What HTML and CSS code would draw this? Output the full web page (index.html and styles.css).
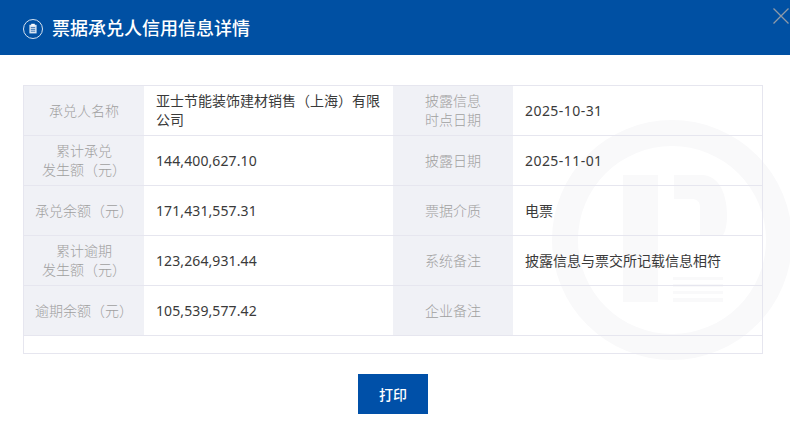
FILE: index.html
```html
<!DOCTYPE html>
<html lang="zh-CN">
<head>
<meta charset="utf-8">
<title>票据承兑人信用信息详情</title>
<link rel="stylesheet" href="styles.css">
</head>
<body>
<header class="header">
  <span class="header-icon">
    <svg viewBox="0 0 20 20" width="20" height="20"><circle cx="10" cy="10" r="9.5" fill="none" stroke="#d5e2f0" stroke-width="1"/><path d="M6.4 5.8h7.2v8.6H6.4z" fill="#d9e5f2"/><path d="M8.2 4.8h3.6v1.8H8.2z" fill="#fff"/><path d="M7.8 8.6h4.4M7.8 10.4h4.4M7.8 12.2h4.4" stroke="#0050a3" stroke-width=".7"/></svg>
  </span>
  <h1 class="title">票据承兑人信用信息详情</h1>
  <svg class="close" viewBox="0 0 16 16" width="16" height="16"><path d="M.5.5l15 15M15.5.5l-15 15" stroke="#8f9aa8" stroke-width="1.3" fill="none"/></svg>
</header>
<main class="content">
  <svg class="watermark" viewBox="0 0 240 240" width="240" height="240">
    <path fill-rule="evenodd" d="M120 0a120 120 0 1 0 0 240a120 120 0 1 0 0-240zM120 26a94 94 0 1 1 0 188a94 94 0 1 1 0-188z" fill="#f9f9fa"/>
    <path d="M71 55h35v127H71z" fill="#f9f9fa"/>
    <path d="M122 55h28c15 0 25 16 25 40c0 8-1 16-4 20h-23v-27c0-7-3-9-9-9h-17z" fill="#f9f9fa"/>
    <path d="M121 157h50v3H121zM121 164h50v3H121zM121 171h50v3H121zM121 178h50v4H121z" fill="#f9f9fa"/>
  </svg>
  <div class="table">
    <div class="row">
      <div class="label">承兑人名称</div><div class="value">亚士节能装饰建材销售（上海）有限公司</div>
      <div class="label">披露信息<br>时点日期</div><div class="value date">2025-10-31</div>
    </div>
    <div class="row">
      <div class="label">累计承兑<br>发生额（元）</div><div class="value num">144,400,627.10</div>
      <div class="label">披露日期</div><div class="value date">2025-11-01</div>
    </div>
    <div class="row">
      <div class="label">承兑余额（元）</div><div class="value num">171,431,557.31</div>
      <div class="label">票据介质</div><div class="value">电票</div>
    </div>
    <div class="row">
      <div class="label">累计逾期<br>发生额（元）</div><div class="value num">123,264,931.44</div>
      <div class="label">系统备注</div><div class="value">披露信息与票交所记载信息相符</div>
    </div>
    <div class="row">
      <div class="label">逾期余额（元）</div><div class="value num">105,539,577.42</div>
      <div class="label">企业备注</div><div class="value"></div>
    </div>
  </div>
  <div class="actions"><button class="print" type="button">打印</button></div>
</main>
</body>
</html>
```

FILE: styles.css
```css
* { box-sizing: border-box; }
html, body { margin: 0; padding: 0; }
body {
  width: 790px;
  height: 424px;
  overflow: hidden;
  background: #fff;
  font-family: "Noto Sans", "Noto Sans CJK SC", sans-serif;
  color: #333;
}
.header {
  position: relative;
  height: 55px;
  background: #0050a3;
  display: flex;
  align-items: center;
  padding-left: 23px;
  gap: 9px;
}
.header-icon { display: flex; margin-top: 3px; }
.title {
  margin: 0 0 2px;
  color: #fff;
  font-size: 18px;
  font-weight: 500;
  font-family: "Noto Sans CJK SC", sans-serif;
  line-height: 24px;
}
.close { position: absolute; top: 8px; right: 1px; }
.content {
  position: relative;
  padding: 30px 27px 0 23px;
}
.watermark { position: absolute; left: 552px; top: 65px; pointer-events: none; }
.table {
  position: relative;
  width: 740px;
  height: 269px;
  border: 1px solid #e6e6ef;
}
.row {
  display: grid;
  grid-template-columns: 120px 249px 120px 249px;
  height: 50px;
  border-bottom: 1px solid #e6e6ef;
}
.label {
  background: #f0f1f6;
  color: #a0a0a0;
  font-size: 14px;
  font-weight: 300;
  line-height: 19px;
  padding-bottom: 1px;
  text-align: center;
  display: flex;
  align-items: center;
  justify-content: center;
  font-family: "Noto Sans CJK SC", sans-serif;
}
.value {
  display: flex;
  align-items: center;
  padding: 0 12px 1px;
  font-size: 14px;
  line-height: 19px;
  color: #3a3a3a;
  font-family: "Noto Sans CJK SC", sans-serif;
}
.value.num { font-family: "Noto Sans", sans-serif; letter-spacing: .1px; padding-bottom: 0; }
.value.date { font-family: "Noto Sans", sans-serif; letter-spacing: .45px; padding-bottom: 0; }
.actions {
  position: relative;
  display: flex;
  justify-content: center;
  margin-top: 20px;
}
.print {
  width: 70px;
  height: 40px;
  margin: 0;
  border: 0;
  background: #0050a8;
  color: #fff;
  font-size: 14px;
  font-family: "Noto Sans CJK SC", sans-serif;
  font-weight: 500;
}
```
